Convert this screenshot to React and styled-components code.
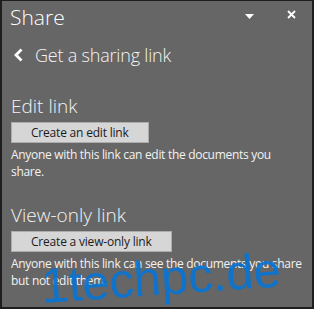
import React from "react";
import styled, {createGlobalStyle} from "styled-components";

const GlobalStyle = createGlobalStyle`
  html, body {
    margin: 0;
    padding: 0;
    background: #666666;
  }
  * {
    box-sizing: border-box;
  }
`;

const Panel = styled.div`
  position: relative;
  width: 314px;
  height: 309px;
  overflow: hidden;
  background: #666666;
  border: 2px solid #1e1e1e;
  border-top-width: 1px;
  font-family: "Open Sans", "Noto Sans", sans-serif;
  color: #ffffff;
`;

const Header = styled.div`
  display: flex;
  align-items: center;
  height: 32px;
  padding-left: 8px;
`;

const Title = styled.h1`
  flex: 1;
  margin: 0;
  font-size: 21px;
  font-weight: 300;
  line-height: 32px;
`;

const IconButton = styled.button`
  display: flex;
  align-items: center;
  justify-content: center;
  align-self: flex-start;
  width: ${({$w}) => $w}px;
  height: 24px;
  margin-top: ${({$mt}) => $mt}px;
  margin-right: ${({$mr}) => $mr}px;
  padding: 0;
  border: none;
  background: none;
  color: #ffffff;
`;

const BackRow = styled.div`
  display: flex;
  align-items: center;
  gap: 12px;
  height: 44px;
  padding-left: 12px;
`;

const BackTitle = styled.span`
  font-size: 18px;
  font-weight: 300;
  line-height: 44px;
  letter-spacing: -0.2px;
  color: #f4f4f4;
`;

const Content = styled.div`
  padding: 16px 8px 0 9px;
`;

const Section = styled.section`
  & + & {
    margin-top: 22px;
  }
`;

const SectionTitle = styled.h2`
  margin: 0 0 3px;
  font-size: 19px;
  font-weight: 300;
  line-height: 26px;
  color: #f4f4f4;
`;

const LinkButton = styled.button`
  display: block;
  height: 21px;
  padding: 0 19px;
  border: 1px solid #adadad;
  background: #d6d6d6;
  color: #1b1b1b;
  font-family: "Open Sans", "Noto Sans", sans-serif;
  font-size: 12px;
  line-height: 19px;
  letter-spacing: -0.2px;
`;

const Description = styled.p`
  margin: 3px 0 0;
  font-size: 12px;
  line-height: 17px;
  letter-spacing: -0.3px;
  color: #f2f2f2;
`;

const Watermark = styled.div`
  position: absolute;
  left: 41px;
  top: 260px;
  font-family: "Liberation Sans", Arial, sans-serif;
  font-size: 49px;
  line-height: 50px;
  color: rgba(8, 116, 212, 0.92);
  transform: rotate(-4deg);
  transform-origin: left bottom;
  white-space: nowrap;
  pointer-events: none;
`;

function App() {
  return (
    <>
      <GlobalStyle/>
      <Panel>
        <Header>
          <Title>Share</Title>
          <IconButton $w={12} $mr={30} $mt={3} aria-label="Options">
            <svg width="9" height="5" viewBox="0 0 9 5">
              <path d="M0 0h9L4.5 5z" fill="#ffffff"/>
            </svg>
          </IconButton>
          <IconButton $w={12} $mr={15} $mt={1} aria-label="Close">
            <svg width="9" height="9" viewBox="0 0 9 9">
              <path d="M1 1l7 7M8 1L1 8" stroke="#ffffff" strokeWidth="1.8"/>
            </svg>
          </IconButton>
        </Header>
        <BackRow>
          <svg width="9" height="14" viewBox="0 0 9 14">
            <path d="M7.5 1.5L2 7l5.5 5.5" stroke="#ffffff" strokeWidth="2.8" fill="none"/>
          </svg>
          <BackTitle>Get a sharing link</BackTitle>
        </BackRow>
        <Content>
          <Section>
            <SectionTitle>Edit link</SectionTitle>
            <LinkButton>Create an edit link</LinkButton>
            <Description>Anyone with this link can edit the documents you share.</Description>
          </Section>
          <Section>
            <SectionTitle>View-only link</SectionTitle>
            <LinkButton>Create a view-only link</LinkButton>
            <Description>Anyone with this link can see the documents you share but not edit them.</Description>
          </Section>
        </Content>
        <Watermark>1techpc.de</Watermark>
      </Panel>
    </>
  );
}

export default App;
